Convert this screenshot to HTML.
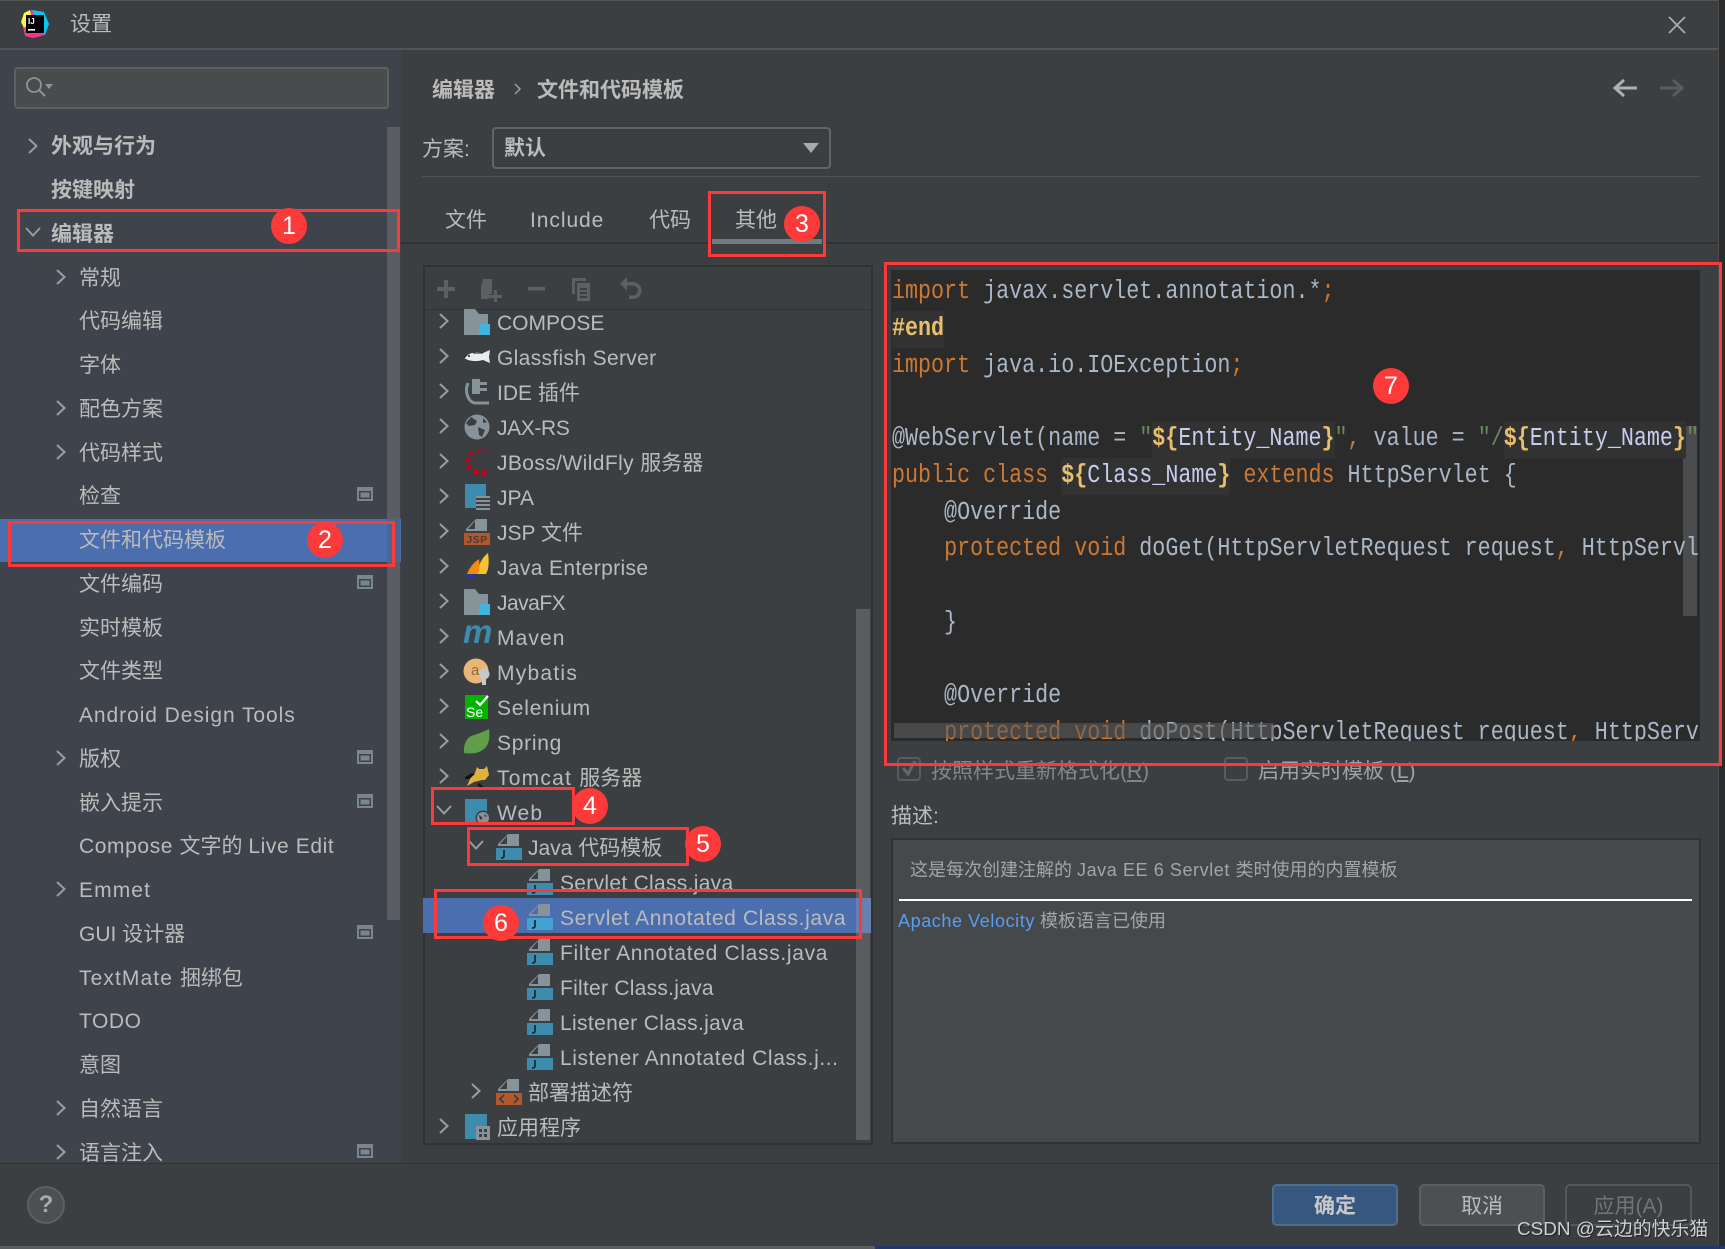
<!DOCTYPE html>
<html><head><meta charset="utf-8"><style>
html,body{margin:0;padding:0;background:#3c3f41}
#r{position:relative;width:1725px;height:1249px;overflow:hidden;background:#3c3f41;font-family:"Liberation Sans","Noto Sans CJK SC",sans-serif;color:#bbb;font-size:21px}
#r div,#r svg{position:absolute}
.t{white-space:nowrap;height:36px;line-height:36px}
.b{font-weight:bold}
.red{border:3px solid #fd3a3a;box-sizing:border-box}
.n{width:36px;height:36px;border-radius:50%;background:#fd3a3a;color:#fff;text-align:center;line-height:36px;font-size:25px}
.c{left:1px;white-space:pre;height:36.75px;line-height:36.75px;font-family:"Liberation Mono",monospace;font-size:21.7px;color:#a9b7c6;transform:scaleY(1.2)}
.k{color:#cc7832}.v{color:#e8bf6a}.e{color:#c8cdf0}.h{background:#323232;display:inline-block;height:30.6px;line-height:30.6px}.s{color:#6a8759}
#r svg.i{width:28px;height:28px;left:463px}
#r svg.l{width:28px;height:28px}
</style></head><body><div id="r">
<svg width="0" height="0" style="left:0;top:0"><defs>
<symbol id="cr" viewBox="0 0 12 18"><path d="M2 2l7.5 7L2 16" fill="none" stroke="#9a9da0" stroke-width="2"/></symbol>
<symbol id="cd" viewBox="0 0 18 12"><path d="M2 2l7 7.5L16 2" fill="none" stroke="#9a9da0" stroke-width="2"/></symbol>
<symbol id="mi" viewBox="0 0 16 14"><rect width="16" height="14" fill="#79868e"/><rect x="2" y="4" width="12" height="8" fill="#3e434c"/><rect x="3.5" y="5.5" width="9" height="5" fill="#79868e"/></symbol>
<symbol id="fold" viewBox="0 0 28 28"><path d="M1 0h11l4 5h9v10H16v11H1z" fill="#87939a"/><rect x="16" y="15" width="11" height="11" fill="#3fb4e3"/></symbol>
<symbol id="jf" viewBox="0 0 28 28"><path d="M13 1h11v12H3v-2z" fill="#87939a"/><path d="M5 11l7-8v8z" fill="#3c3f41"/><path d="M1 15h26v12H1z" fill="#3d8cae"/><path d="M9 17v6q0 2-3 2" fill="none" stroke="#252a2c" stroke-width="1.8"/></symbol>
<symbol id="jfs" viewBox="0 0 28 28"><path d="M13 1h11v12H3v-2z" fill="#87939a"/><path d="M5 11l7-8v8z" fill="#4b6eaf"/><path d="M1 15h26v12H1z" fill="#42a2d4"/><path d="M9 17v6q0 2-3 2" fill="none" stroke="#252a2c" stroke-width="1.8"/></symbol>
</defs></svg>

<!-- title -->
<div style="left:0;top:0;width:1725px;height:1px;background:#555"></div>
<svg style="left:20px;top:9px" width="30" height="30" viewBox="0 0 30 30"><path d="M4 4l8-3 12 2 5 12-4 11-12 3-8-2L3 17z" fill="#ff318c"/><path d="M12 1l12 2 5 12-4 11-6-6z" fill="#07c3f2"/><path d="M4 4l6-3 2 10-8 8-3-6z" fill="#fcf84a"/><rect x="6" y="6" width="18" height="18" fill="#000"/><text x="8" y="15" font-family="Liberation Sans" font-weight="bold" font-size="8" fill="#fff">IJ</text><rect x="8" y="20" width="7" height="1.6" fill="#fff"/></svg>
<div class="t" style="left:70px;top:7px">设置</div>
<svg style="left:1667px;top:15px" width="20" height="20" viewBox="0 0 20 20"><path d="M2 2l16 16M18 2L2 18" stroke="#a8aaab" stroke-width="1.8"/></svg>
<div style="left:0;top:48px;width:1718px;height:2px;background:#525456"></div>
<div style="left:1719px;top:0;width:6px;height:1249px;background:#2b2b2b"></div>
<div style="left:1718px;top:0;width:1px;height:1249px;background:#4a4c4d"></div>

<!-- sidebar -->
<div style="left:0;top:50px;width:401px;height:1113px;background:#3e434c;overflow:hidden">
<div style="left:14px;top:17px;width:375px;height:42px;box-sizing:border-box;background:#484c4c;border:2px solid #5d6163;border-radius:4px"></div>
<svg style="left:24px;top:26px" width="30" height="24" viewBox="0 0 30 24"><circle cx="10" cy="9" r="7" fill="none" stroke="#8f9396" stroke-width="1.8"/><path d="M15 14l6 6" stroke="#8f9396" stroke-width="2"/><path d="M21 8h8l-4 5z" fill="#8f9396"/></svg>
<div style="left:387px;top:77px;width:13px;height:793px;background:#5a5d63"></div>
<div style="left:0;top:469px;width:401px;height:43px;background:#4b6eaf"></div>
<div style="left:387px;top:469px;width:13px;height:43px;background:#476694"></div>
<svg style="left:27px;top:87px" width="12" height="18"><use href="#cr"/></svg>
<svg style="left:24px;top:176px" width="18" height="12"><use href="#cd"/></svg>
<div class="t b" style="left:51px;top:79px">外观与行为</div>
<div class="t b" style="left:51px;top:123px">按键映射</div>
<div class="t b" style="left:51px;top:167px">编辑器</div>
<div class="t" style="left:79px;top:211px">常规</div>
<div class="t" style="left:79px;top:254px">代码编辑</div>
<div class="t" style="left:79px;top:298px">字体</div>
<div class="t" style="left:79px;top:342px">配色方案</div>
<div class="t" style="left:79px;top:386px">代码样式</div>
<div class="t" style="left:79px;top:429px">检查</div>
<div class="t" style="left:79px;top:473px">文件和代码模板</div>
<div class="t" style="left:79px;top:517px">文件编码</div>
<div class="t" style="left:79px;top:561px">实时模板</div>
<div class="t" style="left:79px;top:604px">文件类型</div>
<div class="t" style="left:79px;top:648px;letter-spacing:.93px">Android Design Tools</div>
<div class="t" style="left:79px;top:692px">版权</div>
<div class="t" style="left:79px;top:736px">嵌入提示</div>
<div class="t" style="left:79px;top:779px"><span style="letter-spacing:.6px">Compose </span>文字的 <span style="letter-spacing:.6px">Live Edit</span></div>
<div class="t" style="left:79px;top:823px;letter-spacing:1.1px">Emmet</div>
<div class="t" style="left:79px;top:867px">GUI 设计器</div>
<div class="t" style="left:79px;top:911px"><span style="letter-spacing:1.1px">TextMate </span>捆绑包</div>
<div class="t" style="left:79px;top:954px;letter-spacing:.55px">TODO</div>
<div class="t" style="left:79px;top:998px">意图</div>
<div class="t" style="left:79px;top:1042px">自然语言</div>
<div class="t" style="left:79px;top:1086px">语言注入</div>
<svg style="left:55px;top:218px" width="12" height="18"><use href="#cr"/></svg>
<svg style="left:55px;top:349px" width="12" height="18"><use href="#cr"/></svg>
<svg style="left:55px;top:393px" width="12" height="18"><use href="#cr"/></svg>
<svg style="left:55px;top:699px" width="12" height="18"><use href="#cr"/></svg>
<svg style="left:55px;top:830px" width="12" height="18"><use href="#cr"/></svg>
<svg style="left:55px;top:1049px" width="12" height="18"><use href="#cr"/></svg>
<svg style="left:55px;top:1093px" width="12" height="18"><use href="#cr"/></svg>
<svg style="left:357px;top:437px" width="16" height="14"><use href="#mi"/></svg>
<svg style="left:357px;top:525px" width="16" height="14"><use href="#mi"/></svg>
<svg style="left:357px;top:700px" width="16" height="14"><use href="#mi"/></svg>
<svg style="left:357px;top:744px" width="16" height="14"><use href="#mi"/></svg>
<svg style="left:357px;top:875px" width="16" height="14"><use href="#mi"/></svg>
<svg style="left:357px;top:1094px" width="16" height="14"><use href="#mi"/></svg>
</div>

<!-- header -->
<div class="t b" style="left:432px;top:73px">编辑器</div>
<svg style="left:513px;top:82px" width="9" height="14" viewBox="0 0 9 14"><path d="M2 2l5 5-5 5" fill="none" stroke="#9a9da0" stroke-width="1.5"/></svg>
<div class="t b" style="left:537px;top:73px">文件和代码模板</div>
<svg style="left:1612px;top:78px" width="26" height="20" viewBox="0 0 26 20"><path d="M12 2L3 10l9 8M3 10h22" fill="none" stroke="#aeb0b1" stroke-width="3"/></svg>
<svg style="left:1659px;top:78px" width="26" height="20" viewBox="0 0 26 20"><path d="M14 2l9 8-9 8M23 10H1" fill="none" stroke="#595b5d" stroke-width="3"/></svg>
<div class="t" style="left:422px;top:132px">方案:</div>
<div style="left:492px;top:127px;width:339px;height:42px;box-sizing:border-box;border:2px solid #646464;border-radius:4px"></div>
<div class="t b" style="left:504px;top:131px">默认</div>
<svg style="left:803px;top:143px" width="16" height="11" viewBox="0 0 16 11"><path d="M0 0h16l-8 10z" fill="#aaa"/></svg>
<div style="left:422px;top:176px;width:1278px;height:1px;background:#515151"></div>

<!-- tabs -->
<div class="t" style="left:445px;top:203px">文件</div>
<div class="t" style="left:530px;top:203px;letter-spacing:.94px">Include</div>
<div class="t" style="left:649px;top:203px">代码</div>
<div class="t" style="left:735px;top:203px">其他</div>
<div style="left:401px;top:242px;width:1317px;height:2px;background:#323232"></div>
<div style="left:712px;top:239px;width:110px;height:5px;background:#747a80"></div>

<!-- tree -->
<div style="left:423px;top:265px;width:450px;height:880px;box-sizing:border-box;border:2px solid #323232"></div>
<div style="left:425px;top:309px;width:447px;height:1px;background:#323232"></div>
<svg style="left:435px;top:275px" width="215" height="28" viewBox="0 0 215 28" fill="#5c6062"><path d="M9 5h4v7h7v4h-7v7H9v-7H2v-4h7z"/><path d="M48 4h9v15h-3v5h-8V12zM59 15h3v5h5v3h-5v4h-3v-4h-5v-3h5z"/><rect x="93" y="12" width="17" height="3.5"/><path d="M137 3h14v3h-11v13h-3zM142 8h13v18h-13zM145 13h7v2h-7zM145 17h7v2h-7zM145 21h7v2h-7z" fill-rule="evenodd"/><path d="M192 2v5h6a8.5 8.5 0 1 1 0 17h-4v-3.500h4a5 5 0 0 0 0-10h-6v5l-7-7z"/></svg>
<div style="left:856px;top:609px;width:14px;height:531px;background:#5a5c5e"></div>
<div style="left:423px;top:898px;width:448px;height:35px;background:#4b6eaf"></div>
<div style="left:856px;top:898px;width:15px;height:35px;background:#6681b0"></div>

<div class="t" style="left:497px;top:306px">COMPOSE</div>
<div class="t" style="left:497px;top:341px;letter-spacing:.34px">Glassfish Server</div>
<div class="t" style="left:497px;top:376px">IDE 插件</div>
<div class="t" style="left:497px;top:411px;letter-spacing:-.37px">JAX-RS</div>
<div class="t" style="left:497px;top:446px"><span style="letter-spacing:.4px">JBoss/WildFly </span>服务器</div>
<div class="t" style="left:497px;top:481px">JPA</div>
<div class="t" style="left:497px;top:516px">JSP 文件</div>
<div class="t" style="left:497px;top:551px;letter-spacing:.37px">Java Enterprise</div>
<div class="t" style="left:497px;top:586px;letter-spacing:-.5px">JavaFX</div>
<div class="t" style="left:497px;top:621px;letter-spacing:1.1px">Maven</div>
<div class="t" style="left:497px;top:656px;letter-spacing:1.25px">Mybatis</div>
<div class="t" style="left:497px;top:691px;letter-spacing:.8px">Selenium</div>
<div class="t" style="left:497px;top:726px;letter-spacing:.73px">Spring</div>
<div class="t" style="left:497px;top:761px"><span style="letter-spacing:1.25px">Tomcat </span>服务器</div>
<div class="t" style="left:497px;top:796px;letter-spacing:1.1px">Web</div>
<div class="t" style="left:528px;top:831px">Java 代码模板</div>
<div class="t" style="left:560px;top:866px;letter-spacing:.3px">Servlet Class.java</div>
<div class="t" style="left:560px;top:901px;letter-spacing:.63px">Servlet Annotated Class.java</div>
<div class="t" style="left:560px;top:936px;letter-spacing:.68px">Filter Annotated Class.java</div>
<div class="t" style="left:560px;top:971px;letter-spacing:.26px">Filter Class.java</div>
<div class="t" style="left:560px;top:1006px;letter-spacing:.35px">Listener Class.java</div>
<div class="t" style="left:560px;top:1041px;letter-spacing:.59px">Listener Annotated Class.j...</div>
<div class="t" style="left:528px;top:1076px">部署描述符</div>
<div class="t" style="left:497px;top:1111px">应用程序</div>

<svg style="left:438px;top:312px" width="12" height="18"><use href="#cr"/></svg>
<svg style="left:438px;top:347px" width="12" height="18"><use href="#cr"/></svg>
<svg style="left:438px;top:382px" width="12" height="18"><use href="#cr"/></svg>
<svg style="left:438px;top:417px" width="12" height="18"><use href="#cr"/></svg>
<svg style="left:438px;top:452px" width="12" height="18"><use href="#cr"/></svg>
<svg style="left:438px;top:487px" width="12" height="18"><use href="#cr"/></svg>
<svg style="left:438px;top:522px" width="12" height="18"><use href="#cr"/></svg>
<svg style="left:438px;top:557px" width="12" height="18"><use href="#cr"/></svg>
<svg style="left:438px;top:592px" width="12" height="18"><use href="#cr"/></svg>
<svg style="left:438px;top:627px" width="12" height="18"><use href="#cr"/></svg>
<svg style="left:438px;top:662px" width="12" height="18"><use href="#cr"/></svg>
<svg style="left:438px;top:697px" width="12" height="18"><use href="#cr"/></svg>
<svg style="left:438px;top:732px" width="12" height="18"><use href="#cr"/></svg>
<svg style="left:438px;top:767px" width="12" height="18"><use href="#cr"/></svg>
<svg style="left:435px;top:804px" width="18" height="12"><use href="#cd"/></svg>
<svg style="left:467px;top:839px" width="18" height="12"><use href="#cd"/></svg>
<svg style="left:470px;top:1082px" width="12" height="18"><use href="#cr"/></svg>
<svg style="left:438px;top:1117px" width="12" height="18"><use href="#cr"/></svg>

<svg class="i" style="top:309px"><use href="#fold"/></svg>
<svg class="i" style="top:343px" viewBox="0 0 28 28"><path d="M1 15q8-8 19-5l7-3-1 7 1 6-7-3q-11 3-19-2z" fill="#e9ebec"/><circle cx="6" cy="13" r="1" fill="#222"/><path d="M10 10h10M4 12L1 15" stroke="#222" stroke-width="1"/></svg>
<svg class="i" style="top:378px" viewBox="0 0 28 28"><path d="M9 1h8v3h7v3h-7v3h7v3h-7v3H9z" fill="#87939a"/><path d="M5 5a9 13 0 0 0 8 20h13" fill="none" stroke="#87939a" stroke-width="3"/></svg>
<svg class="i" style="top:413px" viewBox="0 0 28 28"><circle cx="14" cy="14" r="12.500" fill="#87939a"/><path d="M8 4l6 4-2 4-6 1-3-3zM15 14l7 3-3 7-3-2zM20 5l4 4-4 1z" fill="#3c3f41"/></svg>
<svg class="i" style="top:448px" viewBox="0 0 28 28" fill="#c4001a"><circle cx="22" cy="2" r="1.300"/><circle cx="16" cy="3" r="1.600"/><circle cx="9" cy="6" r="2"/><circle cx="5" cy="12" r="2.300"/><circle cx="6" cy="19" r="2.600"/><circle cx="13" cy="24" r="2.800"/><circle cx="21" cy="25" r="3"/></svg>
<svg class="i" style="top:483px" viewBox="0 0 28 28"><path d="M2 1h21v12H13v12H2z" fill="#3d8cae"/><path d="M13 13h14v2H13zM13 17h14v2H13zM13 21h14v2H13zM13 25h14v2H13z" fill="#87939a"/></svg>
<svg class="i" style="top:518px" viewBox="0 0 28 28"><path d="M13 1h11v12H3v-2z" fill="#87939a"/><path d="M5 11l7-8v8z" fill="#3c3f41"/><rect x="1" y="15" width="26" height="12" fill="#b5562b"/><text x="14" y="25" text-anchor="middle" font-family="Liberation Sans" font-weight="bold" font-size="10.500" letter-spacing=".5" fill="#3c3f41">JSP</text></svg>
<svg class="i" style="top:553px" viewBox="0 0 28 28"><path d="M25 0q2 14-2 21H14q2-14 11-21z" fill="#f9c232"/><path d="M16 6q1 8-1 15H4q4-10 12-15z" fill="#f58a0a"/><path d="M1 21h15l-9 6z" fill="#2b3990"/></svg>
<svg class="i" style="top:589px"><use href="#fold"/></svg>
<div class="b" style="left:463px;top:617px;width:30px;height:30px;font:italic bold 33px/30px 'Liberation Sans',sans-serif;color:#3d8cae">m</div>
<svg class="i" style="top:658px" viewBox="0 0 28 28"><circle cx="13" cy="13" r="12.500" fill="#eab677"/><circle cx="21" cy="16" r="5.500" fill="#c8c8c8"/><rect x="19" y="18" width="4" height="9" fill="#c8c8c8"/><text x="8" y="17" font-family="Liberation Sans" font-size="15" fill="#8c6a3a">a</text></svg>
<svg class="i" style="top:693px" viewBox="0 0 28 28"><rect x="2" y="2" width="23" height="24" fill="#00b400"/><path d="M13 8l4 4 8-9" fill="none" stroke="#fff" stroke-width="2.200"/><text x="3" y="24" font-family="Liberation Sans" font-size="14" fill="#fff">Se</text></svg>
<svg class="i" style="top:728px" viewBox="0 0 28 28"><path d="M26 1q2 14-5 20-7 6-20 4Q0 13 8 8q10-3 18-7z" fill="#5f9e4a"/></svg>
<svg class="i" style="top:763px" viewBox="0 0 28 28"><path d="M14 4l2 2 5 0 3-3 2 9-4 5-3 0-8 2-7 4 3-7 5-6z" fill="#e0b23c"/><path d="M2 14l7-4 3 1-6 5-4 0zM16 20l7 6-3 0-6-4z" fill="#14130f"/></svg>
<svg class="i" style="top:798px" viewBox="0 0 28 28"><rect x="2" y="1" width="22" height="25" fill="#3d8cae"/><circle cx="20" cy="20" r="7.500" fill="#3c3f41"/><circle cx="20" cy="20" r="6" fill="#87939a"/><path d="M16 17l4 3-3 2zM21 16l3 2-2 1z" fill="#3c3f41"/></svg>
<svg class="l" style="left:495px;top:833px"><use href="#jf"/></svg>
<svg class="l" style="left:526px;top:868px"><use href="#jf"/></svg>
<svg class="l" style="left:526px;top:903px"><use href="#jfs"/></svg>
<svg class="l" style="left:526px;top:938px"><use href="#jf"/></svg>
<svg class="l" style="left:526px;top:973px"><use href="#jf"/></svg>
<svg class="l" style="left:526px;top:1008px"><use href="#jf"/></svg>
<svg class="l" style="left:526px;top:1043px"><use href="#jf"/></svg>
<svg class="l" style="left:495px;top:1078px" viewBox="0 0 28 28"><path d="M13 1h11v12H3v-2z" fill="#87939a"/><path d="M5 11l7-8v8z" fill="#3c3f41"/><rect x="1" y="15" width="26" height="12" fill="#b5562b"/><path d="M9 17l-4 4 4 4M19 17l4 4-4 4" fill="none" stroke="#3c3f41" stroke-width="1.800"/></svg>
<svg class="i" style="top:1113px" viewBox="0 0 28 28"><rect x="2" y="1" width="22" height="25" fill="#3d8cae"/><rect x="13" y="13" width="14" height="14" fill="#87939a"/><path d="M16 16h3v3h-3zM21 16h3v3h-3zM16 21h3v3h-3zM21 21h3v3h-3z" fill="#3c3f41"/></svg>

<!-- editor -->
<div style="left:891px;top:270px;width:809px;height:471px;background:#2b2b2b;overflow:hidden">
<div style="left:792px;top:156px;width:14px;height:190px;background:#4a4c4e"></div>
<div class="c" style="top:4px"><span class="k">import</span> javax.servlet.annotation.*<span class="k">;</span></div>
<div class="c" style="top:40.75px"><span class="h b v">#end</span></div>
<div class="c" style="top:77.500px"><span class="k">import</span> java.io.IOException<span class="k">;</span></div>
<div class="c" style="top:151px">@WebServlet(name = <span class="s">"</span><span class="h"><span class="v b">${</span><span class="e">Entity_Name</span><span class="v b">}</span></span><span class="s">"</span><span class="k">,</span> value = <span class="s">"/</span><span class="h"><span class="v b">${</span><span class="e">Entity_Name</span><span class="v b">}</span></span><span class="s">"</span></div>
<div class="c" style="top:187.75px"><span class="k">public class</span> <span class="h"><span class="v b">${</span><span class="e">Class_Name</span><span class="v b">}</span></span> <span class="k">extends</span> HttpServlet {</div>
<div class="c" style="top:224.500px">    @Override</div>
<div class="c" style="top:261.25px">    <span class="k">protected void</span> doGet(HttpServletRequest request<span class="k">,</span> HttpServl</div>
<div class="c" style="top:334.75px">    }</div>
<div class="c" style="top:408.25px">    @Override</div>
<div class="c" style="top:445px">    <span class="k">protected void</span> doPost(HttpServletRequest request<span class="k">,</span> HttpServ</div>
<div style="left:3px;top:453px;width:380px;height:15px;background:rgba(92,92,92,.6)"></div>
</div>

<!-- checkboxes -->
<div style="left:897px;top:757px;width:24px;height:24px;box-sizing:border-box;border:2px solid #595c5e;border-radius:4px"></div>
<svg style="left:899px;top:759px" width="20" height="20" viewBox="0 0 20 20"><path d="M4 9l5 6 7-13" fill="none" stroke="#63676a" stroke-width="3"/></svg>
<div class="t" style="left:931px;top:754px;color:#84878a">按照样式重新格式化(<u>R</u>)</div>
<div style="left:1224px;top:757px;width:24px;height:24px;box-sizing:border-box;border:2px solid #595c5e;border-radius:4px"></div>
<div class="t" style="left:1258px;top:754px;color:#a0a2a4">启用实时模板 (<u>L</u>)</div>
<div class="t" style="left:891px;top:799px">描述:</div>

<!-- description -->
<div style="left:891px;top:838px;width:810px;height:306px;box-sizing:border-box;background:#45494a;border:2px solid #323232"></div>
<div class="t" style="left:910px;top:852px;font-size:18px;color:#a3a5a6">这是每次创建注解的 <span style="letter-spacing:.58px">Java EE 6 Servlet </span>类时使用的内置模板</div>
<div style="left:899px;top:899px;width:793px;height:2px;background:#fff"></div>
<div class="t" style="left:898px;top:903px;font-size:18px;color:#a3a5a6"><span style="color:#589df6;letter-spacing:.59px">Apache Velocity</span> 模板语言已使用</div>

<!-- footer -->
<div style="left:0;top:1163px;width:1718px;height:1px;background:#323232"></div>
<div style="left:27px;top:1186px;width:38px;height:38px;box-sizing:border-box;border-radius:50%;background:#4c5052;border:2px solid #5e6060;color:#a8a9aa;font:bold 24px/34px 'Liberation Sans',sans-serif;text-align:center">?</div>
<div style="left:1272px;top:1184px;width:126px;height:42px;box-sizing:border-box;background:#365880;border:2px solid #4c708c;border-radius:5px;text-align:center;line-height:41px;font-weight:bold;color:#c8c8c8">确定</div>
<div style="left:1419px;top:1184px;width:126px;height:42px;box-sizing:border-box;background:#4c5052;border:2px solid #5e6060;border-radius:5px;text-align:center;line-height:41px">取消</div>
<div style="left:1565px;top:1184px;width:127px;height:42px;box-sizing:border-box;border:2px solid #555859;border-radius:5px;text-align:center;line-height:41px;color:#737577">应用(A)</div>
<div class="t" style="left:1517px;top:1212px;font-size:18.900px;color:#d0d0d0;text-shadow:1px 1px 1px #222">CSDN @云边的快乐猫</div>
<div style="left:0;top:1246px;width:875px;height:3px;background:#5a5c5e"></div>
<div style="left:875px;top:1246px;width:850px;height:3px;background:#21396a"></div>

<!-- annotations -->
<div class="red" style="left:17px;top:209px;width:383px;height:43px"></div>
<div class="n" style="left:271px;top:208px">1</div>
<div class="red" style="left:8px;top:521px;width:387px;height:46px"></div>
<div class="n" style="left:307px;top:522px">2</div>
<div class="red" style="left:708px;top:191px;width:118px;height:66px"></div>
<div class="n" style="left:784px;top:206px">3</div>
<div class="red" style="left:431px;top:787px;width:144px;height:38px"></div>
<div class="n" style="left:572px;top:788px">4</div>
<div class="red" style="left:467px;top:827px;width:222px;height:39px"></div>
<div class="n" style="left:685px;top:826px">5</div>
<div class="red" style="left:434px;top:889px;width:428px;height:50px"></div>
<div class="n" style="left:483px;top:905px">6</div>
<div class="red" style="left:884px;top:262px;width:838px;height:504px"></div>
<div class="n" style="left:1373px;top:368px">7</div>
</div></body></html>
